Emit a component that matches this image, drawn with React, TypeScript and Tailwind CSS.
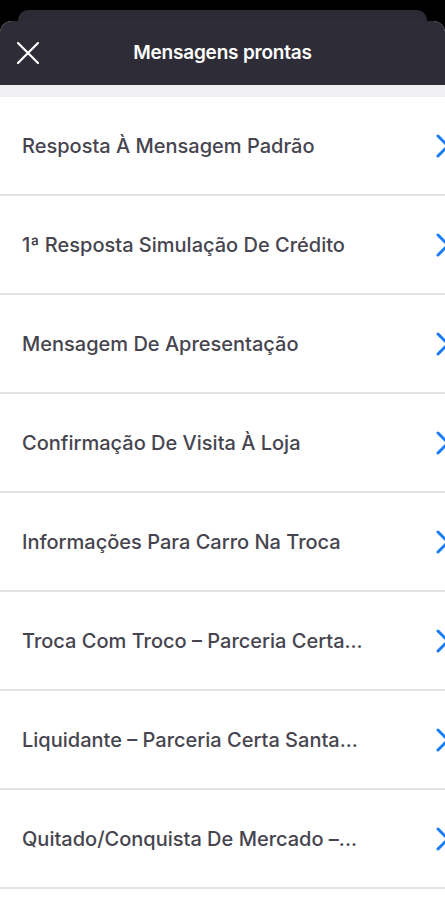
const items = [
  'Resposta À Mensagem Padrão',
  '1ª Resposta Simulação De Crédito',
  'Mensagem De Apresentação',
  'Confirmação De Visita À Loja',
  'Informações Para Carro Na Troca',
  'Troca Com Troco – Parceria Certa...',
  'Liquidante – Parceria Certa Santa...',
  'Quitado/Conquista De Mercado –...',
];

function Chevron() {
  return (
    <svg width="9" height="24" viewBox="0 0 9 24" className="shrink-0">
      <path d="M2 2 L12 12 L2 22" fill="none" stroke="#1a7cf5" strokeWidth="3" strokeLinecap="round" strokeLinejoin="round" />
    </svg>
  );
}

export default function App() {
  return (
    <div className="w-[445px] h-[897px] bg-black overflow-hidden flex flex-col" style={{ fontFamily: 'Inter, "Noto Sans", sans-serif' }}>
      <div className="h-[10px] shrink-0" />
      <div className="mx-[18px] h-[11px] rounded-t-[10px] bg-[#2c2b34] shrink-0" />
      <div className="flex-1 flex flex-col rounded-t-[12px] overflow-hidden bg-white">
        <header className="h-[64px] bg-[#2e2d37] flex items-center relative shrink-0">
          <button className="ml-[17px] w-[22px] h-[22px] flex items-center justify-center">
            <svg width="22" height="22" viewBox="0 0 22 22">
              <path d="M1 1 L21 21 M21 1 L1 21" stroke="white" strokeWidth="2.2" strokeLinecap="round" />
            </svg>
          </button>
          <h1 className="absolute inset-x-0 text-center text-white text-[19px] font-semibold tracking-[-0.2px] pointer-events-none">
            Mensagens prontas
          </h1>
        </header>
        <div className="h-[12px] bg-[#efeff4] shrink-0" />
        <ul className="flex flex-col">
          {items.map((t) => (
            <li key={t} className="h-[99px] shrink-0 flex items-center justify-between pl-[22px] border-b-2 border-[#e2e2e7]">
              <span className="text-[20px] font-medium text-[#46454f]">{t}</span>
              <Chevron />
            </li>
          ))}
        </ul>
      </div>
    </div>
  );
}
